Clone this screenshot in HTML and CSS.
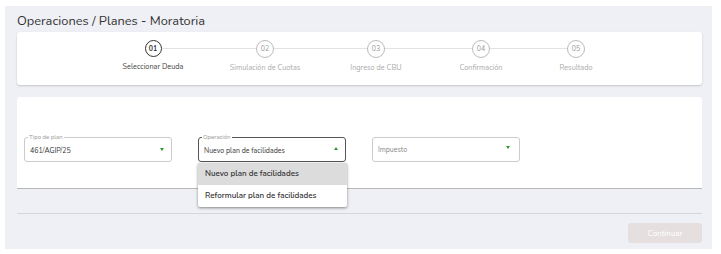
FILE: index.html
```html
<!DOCTYPE html>
<html lang="es">
<head>
    <meta charset="UTF-8">
    <meta name="viewport" content="width=device-width, initial-scale=1.0">
    <title>Planes - Moratoria</title>
    <link rel="stylesheet" href="styles.css">
</head>
<body>
    <div class="main">
        <h1 class="page-title">Operaciones / Planes - Moratoria</h1>

        <div class="card stepper">
            <div class="steps">
                <div class="step active"><span class="step-num">01</span><span class="step-label">Seleccionar Deuda</span></div>
                <div class="step"><span class="step-num">02</span><span class="step-label">Simulación de Cuotas</span></div>
                <div class="step"><span class="step-num">03</span><span class="step-label">Ingreso de CBU</span></div>
                <div class="step"><span class="step-num">04</span><span class="step-label">Confirmación</span></div>
                <div class="step last"><span class="step-num">05</span><span class="step-label">Resultado</span></div>
            </div>
        </div>

        <div class="card form-card">
            <div class="fields">
                <fieldset class="field">
                    <legend>Tipo de plan</legend>
                    <span class="value">461/AGIP/25</span>
                    <span class="arrow down"></span>
                </fieldset>
                <div class="field-wrap">
                    <fieldset class="field focused">
                        <legend>Operación</legend>
                        <span class="value">Nuevo plan de facilidades</span>
                        <span class="arrow up"></span>
                    </fieldset>
                    <ul class="menu">
                        <li class="selected">Nuevo plan de facilidades</li>
                        <li>Reformular plan de facilidades</li>
                    </ul>
                </div>
                <fieldset class="field no-label">
                    <span class="value placeholder">Impuesto</span>
                    <span class="arrow down"></span>
                </fieldset>
            </div>
        </div>

        <div class="divider"></div>

        <div class="actions">
            <button class="btn" disabled>Continuar</button>
        </div>
    </div>
</body>
</html>
```

FILE: styles.css
```css
body {
    margin: 0;
    padding: 6px 9px 5px 5px;
    background: #fff;
    font-family: "Nunito", Lato, "Open Sans", sans-serif;
}
.main {
    background: #eff0f5;
    padding: 6px 10px 6px 12px;
    height: 243px;
    box-sizing: border-box;
}
.page-title {
    margin: 0 0 2px;
    font-size: 12.8px;
    line-height: 18px;
    font-weight: 400;
    color: #333;
}
.card {
    background: #fff;
    border-radius: 3px;
    box-shadow: 0 1px 2px rgba(0,0,0,0.18);
}
.stepper {
    height: 53px;
    box-sizing: border-box;
    padding-top: 8px;
}
.steps {
    display: grid;
    grid-template-columns: 112px 112px 110px 100px 90px;
    padding-left: 80px;
}
.step {
    position: relative;
    display: flex;
    flex-direction: column;
    align-items: center;
}
.step::after {
    content: "";
    position: absolute;
    top: 8px;
    left: 50%;
    width: 100%;
    height: 1px;
    background: #e2e2e2;
}
.step.last::after {
    display: none;
}
.step-num {
    position: relative;
    z-index: 1;
    width: 16px;
    height: 16px;
    border: 1px solid #bbb;
    border-radius: 50%;
    background: #fff;
    font-size: 7px;
    line-height: 16px;
    text-align: center;
    color: #999;
}
.step.active .step-num {
    border: 1.5px solid #333;
    color: #333;
    font-weight: 700;
    width: 15px;
    height: 15px;
    line-height: 15px;
}
.step-label {
    margin-top: 5px;
    font-size: 7.3px;
    color: #aaa;
    white-space: nowrap;
}
.step.active .step-label {
    color: #444;
}
.form-card {
    margin-top: 12px;
    height: 91px;
    box-sizing: border-box;
    padding: 37px 0 0 7px;
    border-radius: 3px 3px 0 0;
    box-shadow: 0 1px 0 #b8b8b8;
}
.fields {
    display: flex;
    gap: 26px;
}
.field-wrap {
    position: relative;
}
.field {
    position: relative;
    margin: 0;
    width: 148px;
    height: 28px;
    box-sizing: border-box;
    border: 1px solid #ccc;
    border-radius: 3px;
    padding: 0 5px;
    display: flex;
    align-items: center;
}
.field legend {
    font-size: 6px;
    color: #999;
    padding: 0 1px;
    margin-left: -2px;
    line-height: 6px;
}
.field.no-label {
    height: 25px;
    margin-top: 3px;
}
.field.focused {
    border-color: #555;
}
.value {
    font-size: 7px;
    color: #333;
}
.value.placeholder {
    color: #888;
}
.arrow {
    position: absolute;
    right: 7px;
    top: 8px;
    width: 0;
    height: 0;
    border-left: 2.5px solid transparent;
    border-right: 2.5px solid transparent;
}
.arrow.down {
    border-top: 3px solid #2e9a2e;
}
.arrow.up {
    border-bottom: 3px solid #2e9a2e;
    top: 7px;
}
.no-label .arrow {
    top: 8px;
    right: 9px;
}
.menu {
    position: absolute;
    top: 29px;
    left: 0;
    z-index: 5;
    width: 149px;
    margin: 0;
    padding: 0;
    list-style: none;
    background: #fff;
    border-radius: 2px;
    box-shadow: 0 1px 3px rgba(0,0,0,0.45);
}
.menu li {
    height: 22px;
    line-height: 22px;
    padding-left: 7px;
    font-size: 8px;
    font-weight: 600;
    color: #333;
}
.menu li.selected {
    background: #dcdcdc;
}
.divider {
    margin-top: 25px;
    height: 1px;
    background: #d6d6da;
}
.actions {
    display: flex;
    justify-content: flex-end;
    margin-top: 9px;
}
.btn {
    width: 74px;
    height: 20px;
    border: none;
    border-radius: 3px;
    background: #e6dfdf;
    color: #fff;
    font-family: inherit;
    font-size: 8px;
}
```
